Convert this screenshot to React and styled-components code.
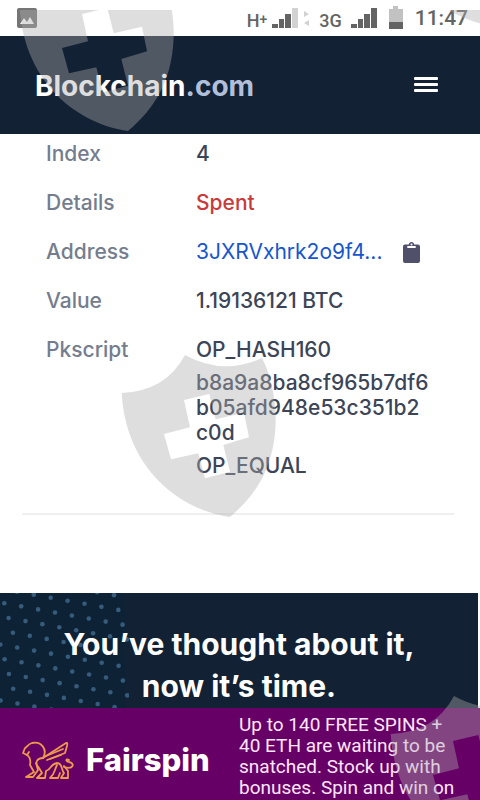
import React from 'react'
import styled, { createGlobalStyle } from 'styled-components';

const GlobalStyle = createGlobalStyle`
    * {
        box-sizing: border-box;
    }

    body {
        margin: 0;
        background-color: #fff;
        font-family: Inter, 'Liberation Sans', sans-serif;
    }

    a {
        text-decoration: none;
    }

    button {
        display: flex;
        padding: 0;
        border: 0;
        background: none;
        cursor: pointer;
    }
`;

const Page = styled.div`
    display: flex;
    flex-direction: column;
    height: 100vh;
    overflow: hidden;
`;

const StatusBar = styled.div`
    display: flex;
    flex: none;
    align-items: center;
    height: 36px;
    padding: 0 12px 0 17px;
    color: #646464;
    font-family: Roboto, sans-serif;
`;

const StatusGroup = styled.div`
    display: flex;
    align-items: flex-end;
    gap: ${({ $gap }) => $gap}px;
    margin-left: ${({ $push }) => ($push ? 'auto' : '10px')};
`;

const NetworkLabel = styled.span`
    font-size: 18px;
    font-weight: 500;
    line-height: 14px;

    sup {
        font-size: 14px;
        line-height: 0;
        vertical-align: 3px;
    }
`;

const Clock = styled.span`
    margin-left: 11px;
    font-size: 21px;
    font-weight: 500;
    line-height: 36px;
`;

const Header = styled.header`
    display: flex;
    flex: none;
    align-items: center;
    justify-content: space-between;
    height: 98px;
    padding: 0 42px 0 35px;
    background-color: #122133;
`;

const Brand = styled.a`
    padding-top: 2px;
    color: #fff;
    font-size: 28px;
    font-weight: 700;
    line-height: 36px;

    span {
        color: #b1bfd9;
    }
`;

const Content = styled.main`
    flex: 1;
    min-height: 0;
    overflow: hidden;
`;

const Details = styled.dl`
    display: flex;
    flex-direction: column;
    gap: 24px;
    margin: 0 26px 0 22px;
    padding: 7px 24px 35px;
    border-bottom: 2px solid #efefef;
`;

const DetailRow = styled.div`
    display: grid;
    grid-template-columns: 150px 1fr;
    font-size: 21px;
    font-weight: 500;
    line-height: 25px;
`;

const Label = styled.dt`
    color: #747d8e;
`;

const Value = styled.dd`
    display: flex;
    flex-direction: ${({ $stack }) => ($stack ? 'column' : 'row')};
    align-items: ${({ $stack }) => ($stack ? 'stretch' : 'center')};
    gap: ${({ $stack }) => ($stack ? 8 : 21)}px;
    min-width: 0;
    margin: 0;
    color: ${({ $color }) => $color || '#3c4557'};
    word-break: break-all;
`;

const AddressLink = styled.a`
    color: #1656ce;
    font-weight: 400;
`;

const Promo = styled.section`
    position: relative;
    margin: 78px 2px 0 0;
    padding: 30px 40px;
    background-color: #122133;
    overflow: hidden;
`;

const DotField = styled.svg`
    position: absolute;
    top: 0;
    left: 0;
`;

const PromoTitle = styled.h2`
    position: relative;
    margin: 0;
    color: #fff;
    font-size: 30px;
    font-weight: 700;
    line-height: 42px;
    text-align: center;
`;

const AdBanner = styled.a`
    display: grid;
    flex: none;
    grid-template-columns: 239px 1fr;
    height: 92px;
    background-color: #660066;
    overflow: hidden;
`;

const AdBrand = styled.div`
    display: flex;
    align-items: center;
    gap: 12px;
    padding: 12px 0 0 21px;
    color: #fff;
    font-size: 31px;
    font-weight: 800;
    line-height: 36px;
`;

const AdText = styled.p`
    margin: 0;
    padding: 6px 20px 0 0;
    color: #ffe6ff;
    font-family: Roboto, sans-serif;
    font-size: 19px;
    line-height: 21px;
`;

const WatermarkLayer = styled.div`
    position: fixed;
    inset: 10px 0 0 0;
    overflow: hidden;
    pointer-events: none;
`;

const ShieldMark = styled.svg`
    position: absolute;
    left: ${({ $x }) => $x}px;
    top: ${({ $y }) => $y}px;
`;

const shields = [
    { x: 19, y: -41 },
    { x: 387, y: -145 },
    { x: 121, y: 345 },
    { x: 390, y: 686 },
];

const dots = [];
for (let row = -2; row < 14; row++) {
    for (let col = -5; col < 9; col++) {
        const x = 4.3 + col * 16.9 + row * 4.3;
        const y = 10.3 + col * 3.05 + row * 14.75;
        if (x > -2 && x < 128 && y > -2) {
            dots.push({ x, y });
        }
    }
}

const Shield = ({ x, y }) => (
    <ShieldMark $x={x} $y={y} width="158" height="164" viewBox="0 0 158 164" aria-hidden="true">
        <path
            fill="rgba(172, 172, 172, 0.4)"
            fillRule="evenodd"
            d="M.7 38Q45 36 64 0Q102 21 141 3C150 20 157 50 154 78C151 110 138 138 109 162C60 155 5 115 .7 38Z
               M63 45L88.3 39L94.7 64.3L123 57.7L128 82.3L102.3 90L109 116.7L84 123.3L77.3 98.3L50 104.3L43 79L69 72.3Z"
        />
    </ShieldMark>
)

const Signal = ({ weak }) => (
    <svg width="27" height="20" viewBox="0 0 27 20" fill="#646464" aria-hidden="true">
        <rect x="0" y="16" width="6" height="4" />
        <rect x="7" y="11" width="5" height="9" />
        <rect x="13" y="6" width="6" height="14" />
        <rect x="20" y="0" width="6" height="20" fill={weak ? '#d2d2d2' : '#646464'} />
    </svg>
)

const App = () => {
    return (
        <>
            <GlobalStyle />
            <Page>
                <StatusBar>
                    <svg width="20" height="20" viewBox="0 0 20 20" aria-hidden="true">
                        <rect width="20" height="20" rx="2" fill="#757575" />
                        <path d="M3 16L7 10L10 14L13 9L17 16Z" fill="#fff" />
                    </svg>
                    <StatusGroup $gap={5} $push>
                        <NetworkLabel>H<sup>+</sup></NetworkLabel>
                        <Signal weak />
                        <svg width="5" height="20" viewBox="0 0 5 20" fill="#d2d2d2" aria-hidden="true">
                            <path d="M0 3L5 6L0 9ZM5 12L0 15L5 18Z" />
                        </svg>
                    </StatusGroup>
                    <StatusGroup $gap={9}>
                        <NetworkLabel>3G</NetworkLabel>
                        <Signal />
                    </StatusGroup>
                    <StatusGroup $gap={0}>
                        <svg width="16" height="24" viewBox="0 0 16 24" aria-hidden="true">
                            <path d="M5 0H10V3H15V17H1V3H5Z" fill="#c2c2c2" />
                            <path d="M1 16H15V23H1Z" fill="#646464" />
                        </svg>
                    </StatusGroup>
                    <Clock>11:47</Clock>
                </StatusBar>

                <Header>
                    <Brand href="#">Blockchain<span>.com</span></Brand>
                    <button type="button" aria-label="Menu">
                        <svg width="24" height="16" viewBox="0 0 24 16" fill="#fff">
                            <rect y="0" width="24" height="3" rx="1" />
                            <rect y="6" width="24" height="3" rx="1" />
                            <rect y="12" width="24" height="3" rx="1" />
                        </svg>
                    </button>
                </Header>

                <Content>
                    <Details>
                        <DetailRow>
                            <Label>Index</Label>
                            <Value>4</Value>
                        </DetailRow>
                        <DetailRow>
                            <Label>Details</Label>
                            <Value $color="#ca3a3a">Spent</Value>
                        </DetailRow>
                        <DetailRow>
                            <Label>Address</Label>
                            <Value>
                                <AddressLink href="#">3JXRVxhrk2o9f4...</AddressLink>
                                <button type="button" aria-label="Copy address">
                                    <svg width="17" height="22" viewBox="0 0 17 22">
                                        <path fill="#50506b" fillRule="evenodd" d="M2 3.500H5.800C6 1.900 7 1 8.500 1S11 1.900 11.200 3.500H15Q17 3.500 17 5.500V20Q17 22 15 22H2Q0 22 0 20V5.500Q0 3.500 2 3.500ZM4.300 5V7H12.700V5ZM8.500 2.500A1 1 0 1 0 8.500 4.500A1 1 0 1 0 8.500 2.500Z" />
                                    </svg>
                                </button>
                            </Value>
                        </DetailRow>
                        <DetailRow>
                            <Label>Value</Label>
                            <Value>1.19136121 BTC</Value>
                        </DetailRow>
                        <DetailRow>
                            <Label>Pkscript</Label>
                            <Value $stack>
                                <span>OP_HASH160</span>
                                <span>b8a9a8ba8cf965b7df6b05afd948e53c351b2c0d</span>
                                <span>OP_EQUAL</span>
                            </Value>
                        </DetailRow>
                    </Details>

                    <Promo>
                        <DotField width="129" height="160" viewBox="0 0 129 160" aria-hidden="true">
                            <rect width="125" height="160" fill="#0e2236" />
                            {dots.map((dot, index) => (
                                <circle key={index} cx={dot.x} cy={dot.y} r="2.3" fill="#365b7b" />
                            ))}
                        </DotField>
                        <PromoTitle>You’ve thought about it,<br />now it’s time.</PromoTitle>
                    </Promo>
                </Content>

                <AdBanner href="#">
                    <AdBrand>
                        <svg width="53" height="40" viewBox="0 0 53 40" fill="none" stroke="#ee9a4c" strokeWidth="1.800" strokeLinecap="round" strokeLinejoin="round" aria-hidden="true">
                            <path d="M22 18L45 3Q47 2 46 6L44 13L26 20" />
                            <path d="M25 16L42 9M29 19L40 15" />
                            <path d="M22 18C27 9 20 1 11 3C7 4 6 7 4 8L2 13L6 15L8 12" />
                            <path d="M6 15C9 17 10 20 9 25L13 32L5 37H12L17 30L15 23" />
                            <path d="M22 18C16 18 13 23 18 28L21 33L16 38H24L25 31C31 29 29 24 36 23C42 23 40 30 43 33L40 38H47V31L43 26" />
                            <path d="M36 25C33 31 34 34 29 38H37L39 33" />
                            <path d="M43 27C53 30 54 23 48 22C44 21 45 18 48 20" />
                        </svg>
                        Fairspin
                    </AdBrand>
                    <AdText>
                        Up to 140 FREE SPINS + 40 ETH are waiting to be snatched. Stock up with bonuses. Spin and win on
                    </AdText>
                </AdBanner>
            </Page>
            <WatermarkLayer>
                {shields.map((shield, index) => (
                    <Shield key={index} x={shield.x} y={shield.y} />
                ))}
            </WatermarkLayer>
        </>
    )
}

export default App
